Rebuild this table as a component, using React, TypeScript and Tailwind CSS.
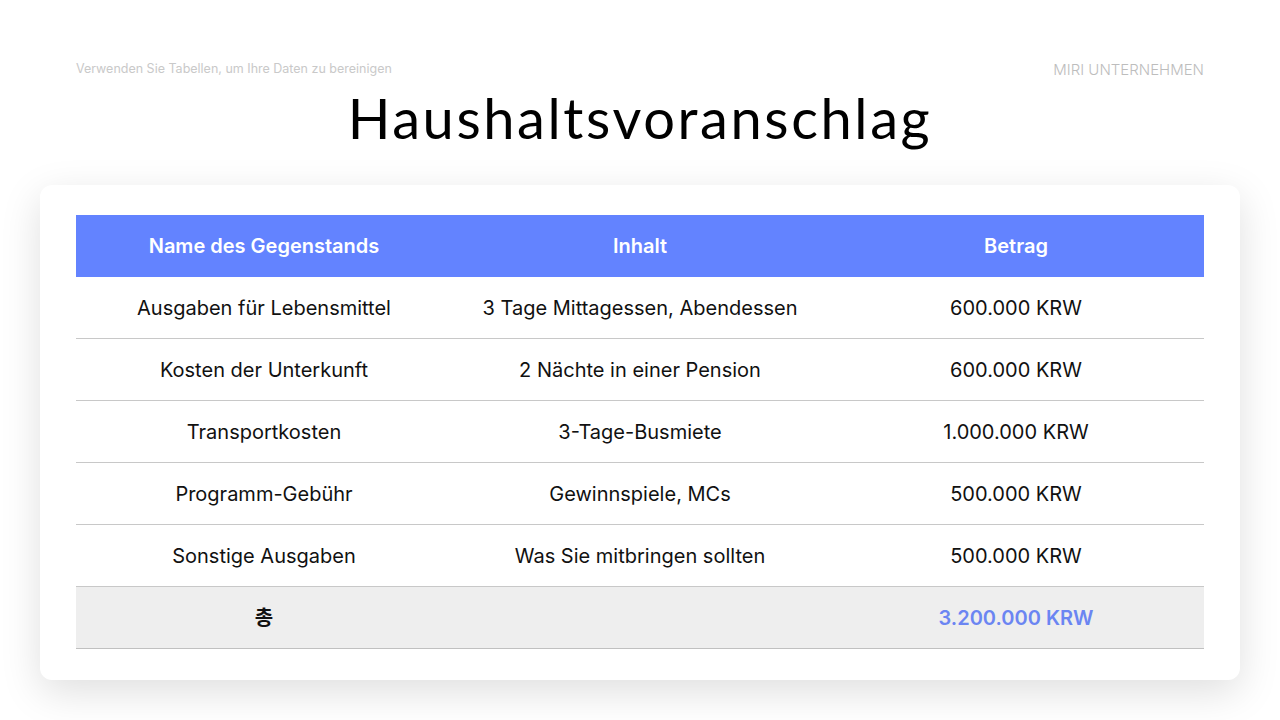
const rows = [
  ["Ausgaben für Lebensmittel", "3 Tage Mittagessen, Abendessen", "600.000 KRW"],
  ["Kosten der Unterkunft", "2 Nächte in einer Pension", "600.000 KRW"],
  ["Transportkosten", "3-Tage-Busmiete", "1.000.000 KRW"],
  ["Programm-Gebühr", "Gewinnspiele, MCs", "500.000 KRW"],
  ["Sonstige Ausgaben", "Was Sie mitbringen sollten", "500.000 KRW"],
];

export default function App() {
  return (
    <div className="w-[1280px] h-[720px] bg-white overflow-hidden font-['Inter','Noto_Sans_CJK_KR',sans-serif]">
      <div className="flex justify-between items-start px-[76px] pt-[60px] h-[78px]">
        <p className="text-[12.5px] text-[#c9c9c9]">Verwenden Sie Tabellen, um Ihre Daten zu bereinigen</p>
        <p className="text-[15px] font-light text-[#bdbdbd] -mt-[1px]">MIRI UNTERNEHMEN</p>
      </div>
      <h1 className="text-center text-[56px] leading-[80px] text-black font-['Lato',sans-serif] tracking-[2.6px]">
        Haushaltsvoranschlag
      </h1>
      <div className="mx-[40px] mt-[27px] bg-white rounded-[12px] shadow-[0_12px_40px_rgba(0,0,0,0.13)] px-[36px] pt-[30px] pb-[31px]">
        <div className="grid grid-cols-3 bg-[#6383ff] h-[62px] items-center text-white text-[20px] font-semibold text-center">
          <div>Name des Gegenstands</div>
          <div>Inhalt</div>
          <div>Betrag</div>
        </div>
        {rows.map((r) => (
          <div key={r[0]} className="grid grid-cols-3 h-[62px] items-center text-center text-[20px] text-[#111] border-b border-[#c8c8c8]">
            <div>{r[0]}</div>
            <div>{r[1]}</div>
            <div>{r[2]}</div>
          </div>
        ))}
        <div className="grid grid-cols-3 h-[62px] items-center text-center text-[20px] bg-[#eeeeee] border-b border-[#c0c0c0] font-semibold">
          <div className="text-[#111]">총</div>
          <div></div>
          <div className="text-[#6b85f2]">3.200.000 KRW</div>
        </div>
      </div>
    </div>
  );
}
